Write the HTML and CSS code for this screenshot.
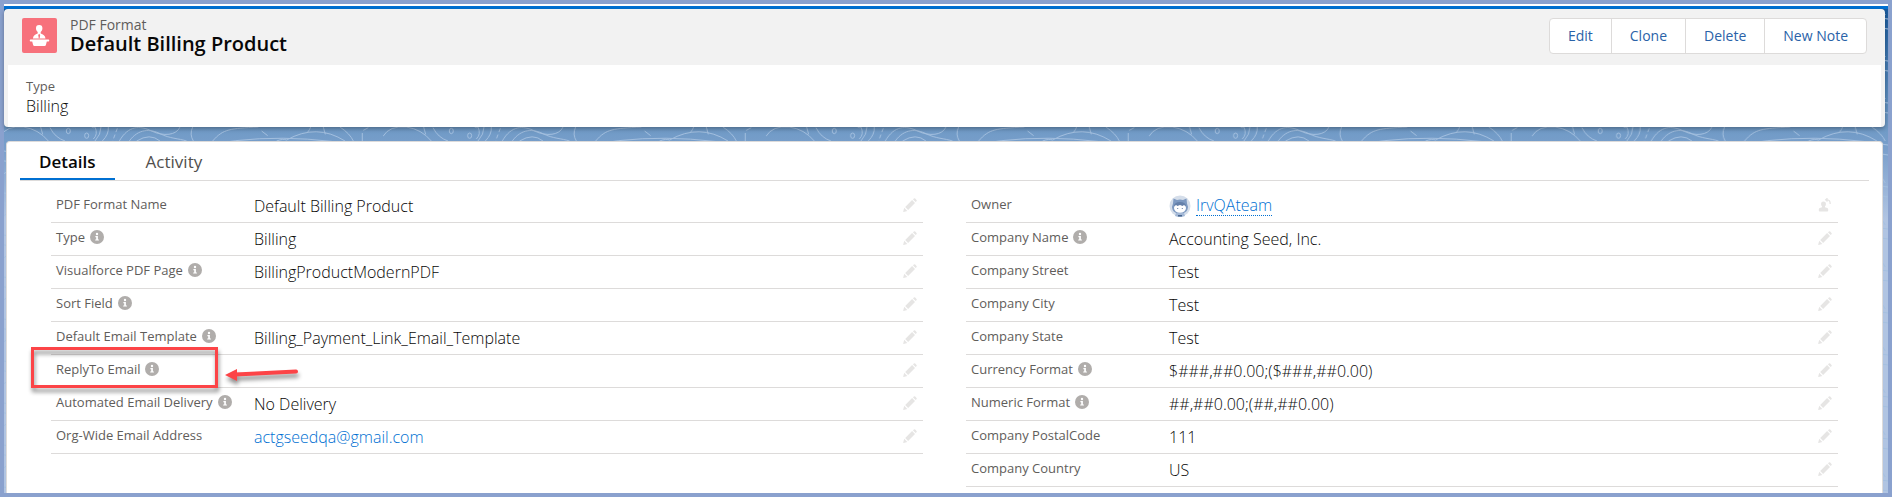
FILE: index.html
```
<!DOCTYPE html>
<html lang="en">
<head>
  <meta charset="UTF-8">
  <meta name="viewport" content="width=device-width, initial-scale=1.0">
  <title>Default Billing Product | PDF Format</title>
  <link rel="stylesheet" href="styles.css">
</head>
<body>

  <!-- icons used by the rows -->
  <svg class="sprite" aria-hidden="true">
    <symbol id="info" viewBox="0 0 14 14">
      <circle cx="7" cy="7" r="7" fill="#b0adab"/>
      <circle cx="7" cy="4" r="1.2" fill="#fff"/>
      <path d="M5.4 6h2.5v3.4h1v1.2H5.2V9.4h1V7.2h-.8z" fill="#fff"/>
    </symbol>
    <symbol id="pencil" viewBox="0 0 14 14">
      <path d="M2.2 9l6.900-6.900 2.900 2.900L5.100 11.900zM10 1.400l.8-.8q.7-.6 1.400 0l1.300 1.300q.6.7 0 1.400l-.8.8zM.2 13.400l1-3.600 3.100 3.100-3.600 1q-.6.1-.5-.5z" fill="#e6e5e4"/>
    </symbol>
    <symbol id="change-owner" viewBox="0 0 14 14">
      <path d="M5.500 3.600a2.400 2.400 0 0 1 2.400 2.600c0 1-.5 1.600-.9 2.100v1l2.200.7c.7.3 1 .8 1 1.500v1.100q0 .9-.9.9H1.700q-.9 0-.9-.9v-1.100c0-.7.3-1.200 1-1.500l2.200-.7v-1c-.4-.5-.9-1.100-.9-2.100a2.400 2.400 0 0 1 2.400-2.600z" fill="#e6e5e4"/>
      <path d="M8 1.800h1.500q2.700.3 2.700 4.100M9.500.2L7.700 1.800l1.800 1.700" fill="none" stroke="#e6e5e4" stroke-width="1.300"/>
    </symbol>
  </svg>

  <div class="page">
    <div class="topbar"></div>

    <div class="canvas">
      <svg class="waves" width="100%" height="100%" aria-hidden="true">
        <defs>
          <pattern id="wave" width="1149" height="126" patternUnits="userSpaceOnUse" patternTransform="translate(-4 118) scale(.3333)">
            <g fill="none" stroke="#a3bfdf" stroke-width="3">
              <path d="M0 28Q20 -5 70 0Q115 6 145 42M122 0l6 22M150 2Q165 32 195 42"/>
              <ellipse cx="205" cy="12" rx="6" ry="8"/>
              <ellipse cx="260" cy="26" rx="6" ry="8"/>
              <path d="M275 0q6 4 10 0q10 22-5 36M303 0q0 22-18 42M325 0q2 22-18 42"/>
              <path d="M352 4l-14 38" stroke-dasharray="12 8"/>
              <path d="M358 42C385-5 420-5 455 12S530 25 540 0M388 42C415 5 450 5 480 20S535 34 560 42M410 42q40-25 70 0"/>
              <path d="M578 0q-10 22 2 42M638 42C670 5 690 5 775 0M785 12l18 14M830 42q20-8 30-3Q950-12 1035 42M922 17q8-10 10-17M970 0l6 22M1020 0q30 20 40 42"/>
              <path d="M1087 42V18M1090 10l15-8"/>
              <path d="M0 70Q300 130 570 65T1149 70M0 100Q300 150 570 90T1149 100"/>
            </g>
          </pattern>
        </defs>
        <rect width="100%" height="100%" fill="url(#wave)"/>
      </svg>

      <header class="record">
        <div class="record-head">
          <svg class="record-icon" viewBox="0 0 35 35" aria-hidden="true">
            <rect width="35" height="35" rx="2" fill="#f7717c"/>
            <g fill="#fff">
              <path d="M17.200 7a3.200 3.200 0 0 1 3.200 3.400c0 1.500-.8 2.700-1.700 3.600v1.400c2.400.8 4.500 2 4.800 5h-12.600c.3-3 2.400-4.200 4.800-5V14c-.9-.9-1.700-2.100-1.700-3.600A3.200 3.200 0 0 1 17.200 7z"/>
              <path d="M8.500 21.600h18q.7 0 .7.700v.5q0 .7-.7.700h-1.700l-1 3.700q-.3.800-1.200.8H12.400q-.9 0-1.200-.8l-1-3.700H8.500q-.7 0-.7-.7v-.5q0-.7.7-.7z"/>
            </g>
            <path d="M17.200 15.800l-1 1.200.6 3.600h.8l.6-3.600z" fill="#f7717c"/>
          </svg>
          <div class="record-name">
            <p class="object">PDF Format</p>
            <h1>Default Billing Product</h1>
          </div>
          <div class="actions">
            <button type="button">Edit</button>
            <button type="button">Clone</button>
            <button type="button">Delete</button>
            <button type="button">New Note</button>
          </div>
        </div>
        <div class="record-body">
          <p class="caption">Type</p>
          <p class="highlight">Billing</p>
        </div>
      </header>

      <main class="card">
        <div class="tabs" role="tablist">
          <button type="button" class="tab active" role="tab" aria-selected="true">Details</button>
          <button type="button" class="tab" role="tab" aria-selected="false">Activity</button>
        </div>

        <div class="columns">
          <dl class="fields">
            <div class="field">
              <dt>PDF Format Name</dt>
              <dd>Default Billing Product</dd>
              <button type="button" class="edit" aria-label="Edit PDF Format Name"><svg><use href="#pencil"/></svg></button>
            </div>
            <div class="field">
              <dt>Type <svg class="info"><use href="#info"/></svg></dt>
              <dd>Billing</dd>
              <button type="button" class="edit" aria-label="Edit Type"><svg><use href="#pencil"/></svg></button>
            </div>
            <div class="field">
              <dt>Visualforce PDF Page <svg class="info"><use href="#info"/></svg></dt>
              <dd>BillingProductModernPDF</dd>
              <button type="button" class="edit" aria-label="Edit Visualforce PDF Page"><svg><use href="#pencil"/></svg></button>
            </div>
            <div class="field">
              <dt>Sort Field <svg class="info"><use href="#info"/></svg></dt>
              <dd></dd>
              <button type="button" class="edit" aria-label="Edit Sort Field"><svg><use href="#pencil"/></svg></button>
            </div>
            <div class="field">
              <dt>Default Email Template <svg class="info"><use href="#info"/></svg></dt>
              <dd>Billing_Payment_Link_Email_Template</dd>
              <button type="button" class="edit" aria-label="Edit Default Email Template"><svg><use href="#pencil"/></svg></button>
            </div>
            <div class="field marked">
              <dt>ReplyTo Email <svg class="info"><use href="#info"/></svg></dt>
              <dd></dd>
              <button type="button" class="edit" aria-label="Edit ReplyTo Email"><svg><use href="#pencil"/></svg></button>
              <svg class="arrow" viewBox="0 0 74 18" aria-hidden="true">
                <path d="M10 8.500L71 5.500" stroke="#fc4447" stroke-width="4" stroke-linecap="round"/>
                <path d="M0 9L12 3v12z" fill="#fc4447"/>
              </svg>
            </div>
            <div class="field">
              <dt>Automated Email Delivery <svg class="info"><use href="#info"/></svg></dt>
              <dd>No Delivery</dd>
              <button type="button" class="edit" aria-label="Edit Automated Email Delivery"><svg><use href="#pencil"/></svg></button>
            </div>
            <div class="field">
              <dt>Org-Wide Email Address</dt>
              <dd><a href="mailto:actgseedqa@gmail.com">actgseedqa@gmail.com</a></dd>
              <button type="button" class="edit" aria-label="Edit Org-Wide Email Address"><svg><use href="#pencil"/></svg></button>
            </div>
          </dl>

          <dl class="fields">
            <div class="field">
              <dt>Owner</dt>
              <dd>
                <svg class="avatar" viewBox="0 0 22 22" aria-hidden="true">
                  <circle cx="11" cy="11" r="10.500" fill="#d5deea"/>
                  <path d="M4.500 3.500l3.500 1.500q3-1 6 0l3.500-1.500.5 5q1.500 3 .5 6-1.500 4-7.500 4t-7.500-4q-1-3 .5-6z" fill="#7d99c1"/>
                  <path d="M7 18h8l1 3q-5 2-10 0z" fill="#a3b8d6"/>
                  <ellipse cx="11" cy="13" rx="6" ry="4.800" fill="#fff"/>
                  <path d="M5 11.500q0-4.500 6-4.500t6 4.500l-2-1.500-1.500 1-2.500-1-2.500 1-1.500-1z" fill="#6480aa"/>
                  <circle cx="8.700" cy="13.500" r=".6" fill="#5a75a0"/>
                  <circle cx="13.300" cy="13.500" r=".6" fill="#5a75a0"/>
                  <path d="M9 20h4v1.500H9z" fill="#49668f"/>
                </svg>
                <a href="#" class="owner">IrvQAteam</a>
              </dd>
              <button type="button" class="edit" aria-label="Change Owner"><svg><use href="#change-owner"/></svg></button>
            </div>
            <div class="field">
              <dt>Company Name <svg class="info"><use href="#info"/></svg></dt>
              <dd>Accounting Seed, Inc.</dd>
              <button type="button" class="edit" aria-label="Edit Company Name"><svg><use href="#pencil"/></svg></button>
            </div>
            <div class="field">
              <dt>Company Street</dt>
              <dd>Test</dd>
              <button type="button" class="edit" aria-label="Edit Company Street"><svg><use href="#pencil"/></svg></button>
            </div>
            <div class="field">
              <dt>Company City</dt>
              <dd>Test</dd>
              <button type="button" class="edit" aria-label="Edit Company City"><svg><use href="#pencil"/></svg></button>
            </div>
            <div class="field">
              <dt>Company State</dt>
              <dd>Test</dd>
              <button type="button" class="edit" aria-label="Edit Company State"><svg><use href="#pencil"/></svg></button>
            </div>
            <div class="field">
              <dt>Currency Format <svg class="info"><use href="#info"/></svg></dt>
              <dd>$###,##0.00;($###,##0.00)</dd>
              <button type="button" class="edit" aria-label="Edit Currency Format"><svg><use href="#pencil"/></svg></button>
            </div>
            <div class="field">
              <dt>Numeric Format <svg class="info"><use href="#info"/></svg></dt>
              <dd>##,##0.00;(##,##0.00)</dd>
              <button type="button" class="edit" aria-label="Edit Numeric Format"><svg><use href="#pencil"/></svg></button>
            </div>
            <div class="field">
              <dt>Company PostalCode</dt>
              <dd>111</dd>
              <button type="button" class="edit" aria-label="Edit Company PostalCode"><svg><use href="#pencil"/></svg></button>
            </div>
            <div class="field">
              <dt>Company Country</dt>
              <dd>US</dd>
              <button type="button" class="edit" aria-label="Edit Company Country"><svg><use href="#pencil"/></svg></button>
            </div>
          </dl>
        </div>
      </main>
    </div>
  </div>

</body>
</html>
```
FILE: styles.css
```
*,
*::before {
  box-sizing: border-box;
}

body {
  margin: 0;
  font-family: 'Open Sans', 'Noto Sans', sans-serif;
  font-size: 16px;
  font-weight: 300;
  color: #080707;
}

h1, p, dl, dd {
  margin: 0;
}

button {
  font-family: inherit;
  cursor: pointer;
}

a {
  color: #0070d2;
  text-decoration: none;
}

.sprite {
  display: none;
}

.page {
  display: flex;
  flex-direction: column;
  min-height: 100vh;
  border: 4px solid #8aa1ce;
}

.topbar {
  height: 5px;
  background-color: #0070d2;
  border-top: 2px solid #fff;
}

.canvas {
  position: relative;
  flex: 1;
  display: flex;
  flex-direction: column;
  gap: 14px;
  background: linear-gradient(#195a9c, #6f9ac6 118px, #7a9fcb 140px, #b0c4e2 210px);
}

.waves {
  position: absolute;
  inset: 0;
}

/* record header */
.record {
  position: relative;
  margin-right: 3px;
  background-color: #f2f2f2;
  border-radius: 4px;
  box-shadow: 0 2px 4px rgba(0, 0, 0, 0.3);
}

.record-head {
  display: flex;
  align-items: flex-start;
  height: 56px;
  padding: 9px 18px 0;
}

.record-icon {
  width: 35px;
  height: 35px;
  margin-right: 13px;
}

.record-name {
  flex: 1;
  margin-top: -2px;
}

.object {
  font-size: 14px;
  line-height: 18px;
  font-weight: 400;
  color: #5f5d5b;
}

h1 {
  font-size: 20px;
  line-height: 20px;
  font-weight: 600;
}

.actions {
  display: flex;
  border: 1px solid #dddbda;
  border-radius: 4px;
  background-color: #fff;
}

.actions button {
  height: 34px;
  padding: 0 18px 2px;
  border: none;
  border-left: 1px solid #dddbda;
  background: none;
  font-size: 14px;
  color: #2a62a8;
}

.actions button:first-child {
  border-left: none;
}

.record-body {
  height: 62px;
  margin: 0 4px;
  padding: 12px 18px;
  background-color: #fff;
}

.caption {
  font-size: 13px;
  line-height: 18px;
  font-weight: 400;
  color: #5f5d5b;
}

.highlight {
  line-height: 22px;
  color: #080707;
}

/* details card */
.card {
  position: relative;
  flex: 1;
  margin: 0 5px 0 2px;
  background-color: #fff;
  border: 1px solid #dddbda;
  border-bottom: none;
  border-radius: 4px 4px 0 0;
}

.tabs {
  display: flex;
  height: 39px;
  margin: 0 13px;
  border-bottom: 1px solid #dddbda;
}

.tab {
  padding: 3px 19px 0;
  margin-right: 12px;
  border: none;
  border-bottom: 2px solid transparent;
  background: none;
  font-size: 17px;
  color: #514f4d;
}

.tab.active {
  border-bottom-color: #0070d2;
  font-weight: 600;
  color: #080707;
}

.columns {
  display: flex;
  gap: 43px;
  padding: 9px 44px 6px;
}

.fields {
  flex: 1;
}

.field {
  position: relative;
  display: flex;
  height: 33px;
  padding: 0 5px;
  border-bottom: 1px solid #dddbda;
}

dt {
  display: flex;
  align-items: center;
  gap: 5px;
  width: 198px;
  height: 28px;
  font-size: 13px;
  font-weight: 400;
  color: #5f5d5b;
}

.info {
  width: 14px;
  height: 14px;
}

dd {
  flex: 1;
  display: flex;
  align-items: center;
  height: 31px;
}

.avatar {
  width: 22px;
  height: 22px;
  margin-right: 5px;
}

.owner {
  line-height: 20px;
  border-bottom: 1px dotted #0070d2;
}

.edit {
  height: 30px;
  padding: 0 1px;
  border: none;
  background: none;
}

.edit svg {
  display: block;
  width: 14px;
  height: 14px;
}

/* callout over the ReplyTo Email field */
.marked::before {
  content: '';
  position: absolute;
  left: -20px;
  top: -8px;
  width: 187px;
  height: 41px;
  border: 3px solid #fc4447;
  filter: drop-shadow(1px 4px 2px rgba(0, 0, 0, 0.45));
}

.arrow {
  position: absolute;
  left: 174px;
  top: 11px;
  width: 74px;
  height: 18px;
  overflow: visible;
  filter: drop-shadow(1px 4px 2px rgba(0, 0, 0, 0.45));
}
```
